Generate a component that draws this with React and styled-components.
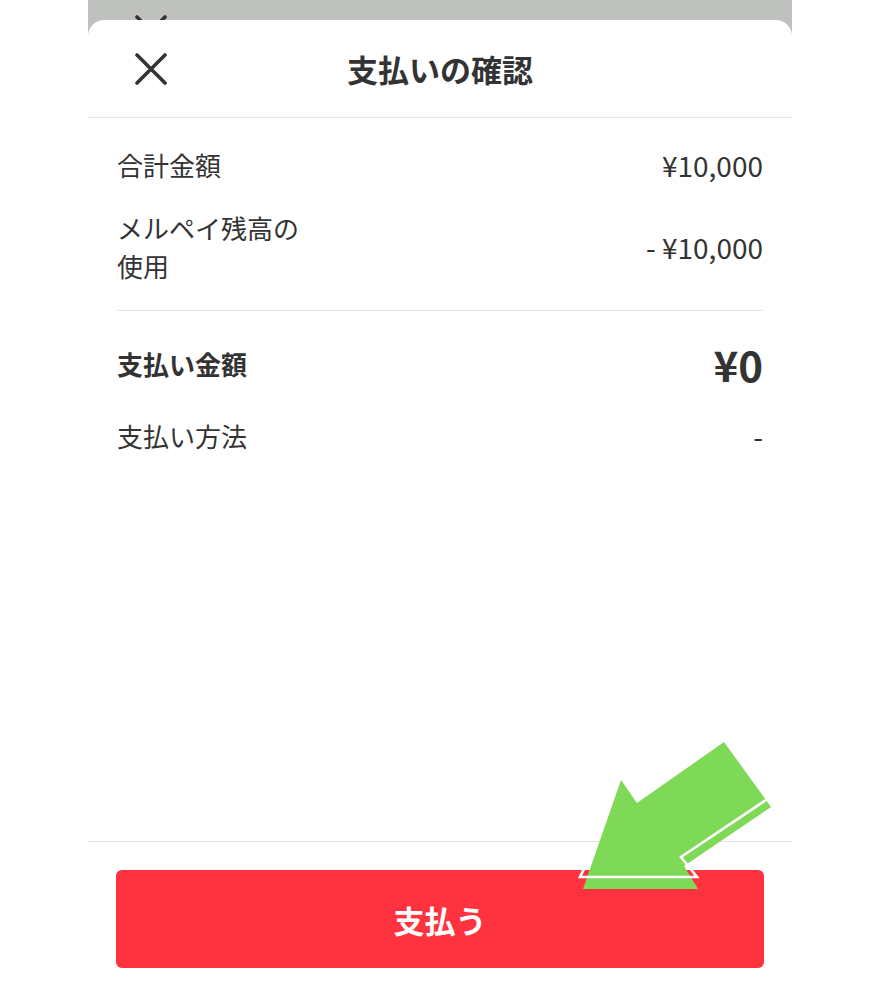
import React from 'react';
import styled, { createGlobalStyle } from 'styled-components';

const Global = createGlobalStyle`
  html, body { margin: 0; padding: 0; background: #fff; }
  body { font-family: "Noto Sans CJK JP", "Noto Sans", sans-serif; color: #333; }
`;

const Page = styled.div`
  position: relative;
  width: 704px;
  height: 1000px;
  margin: 0 auto;
  background: #bfc1be;
  overflow: hidden;
`;

const Header = styled.div`
  display: grid;
  grid-template-columns: 1fr auto 1fr;
  align-items: ${(p) => (p.$back ? 'start' : 'center')};
  height: ${(p) => (p.$back ? '60px' : '98px')};
  padding: ${(p) => (p.$back ? '15px 47px 0' : '0 47px')};
  box-sizing: border-box;
  border-bottom: ${(p) => (p.$back ? 'none' : '1px solid #e6e6e6')};
`;

const CloseBtn = styled.div`
  width: 32px;
  height: 32px;
  display: flex;
`;

const Title = styled.div`
  font-size: 31px;
  line-height: 36px;
  font-weight: 700;
  color: #333;
  text-align: center;
`;

const Sheet = styled.div`
  position: absolute;
  top: 20px;
  left: 0;
  right: 0;
  bottom: 0;
  background: #fff;
  border-radius: 16px 16px 0 0;
  display: flex;
  flex-direction: column;
`;

const Body = styled.div`
  flex: 1;
  padding: 0 29px;
`;

const Section = styled.div`
  display: flex;
  flex-direction: column;
  gap: ${(p) => p.$gap}px;
  padding: ${(p) => p.$top}px 0 ${(p) => p.$bottom}px;
  border-bottom: ${(p) => (p.$divider ? '1px solid #e3e3e3' : 'none')};
`;

const Row = styled.div`
  display: flex;
  justify-content: space-between;
  align-items: center;
`;

const Label = styled.div`
  font-size: 26px;
  line-height: 38px;
  font-weight: ${(p) => (p.$bold ? 700 : 400)};
  max-width: 200px;
  color: #333;
`;

const Value = styled.div`
  font-size: ${(p) => (p.$large ? '42px' : '28px')};
  line-height: 38px;
  font-weight: ${(p) => (p.$large ? 700 : 400)};
  color: #333;
  text-align: right;
`;

const Footer = styled.div`
  border-top: 1px solid #e3e3e3;
  padding: 28px 28px 32px;
`;

const PayButton = styled.button`
  display: flex;
  align-items: center;
  justify-content: center;
  width: 100%;
  height: 98px;
  border: none;
  border-radius: 6px;
  background: #ff3340;
  color: #fff;
  font-family: inherit;
  font-size: 31px;
  font-weight: 700;
`;

const Overlay = styled.svg`
  position: absolute;
  left: 0;
  top: 0;
  width: 704px;
  height: 1000px;
  pointer-events: none;
`;

const XIcon = () => (
  <svg width="32" height="32" viewBox="0 0 32 32">
    <path d="M2 2 L30 30 M30 2 L2 30" stroke="#333" strokeWidth="3.6" strokeLinecap="round" fill="none" />
  </svg>
);

export default function App() {
  return (
    <>
      <Global />
      <Page>
        <Header $back>
          <CloseBtn><XIcon /></CloseBtn>
          <Title>メルペイ</Title>
          <div />
        </Header>
        <Sheet>
          <Header>
            <CloseBtn><XIcon /></CloseBtn>
            <Title>支払いの確認</Title>
            <div />
          </Header>
          <Body>
            <Section $top={28} $bottom={25} $gap={25} $divider>
              <Row>
                <Label>合計金額</Label>
                <Value>¥10,000</Value>
              </Row>
              <Row>
                <Label>メルペイ残高の使用</Label>
                <Value>- ¥10,000</Value>
              </Row>
            </Section>
            <Section $top={34} $bottom={0} $gap={34}>
              <Row>
                <Label $bold>支払い金額</Label>
                <Value $large>¥0</Value>
              </Row>
              <Row>
                <Label>支払い方法</Label>
                <Value>-</Value>
              </Row>
            </Section>
          </Body>
          <Footer>
            <PayButton>支払う</PayButton>
          </Footer>
        </Sheet>
        <Overlay viewBox="88 0 704 1000">
          <polygon
            points="724,742 771,807 684,866 698,889 583,889 621,780 637,803"
            fill="#7ed957"
          />
          <polyline
            points="766,800 681,857 697,877 580,877 584,869"
            fill="none"
            stroke="#fff"
            strokeWidth="2.6"
            strokeLinejoin="miter"
          />
        </Overlay>
      </Page>
    </>
  );
}
